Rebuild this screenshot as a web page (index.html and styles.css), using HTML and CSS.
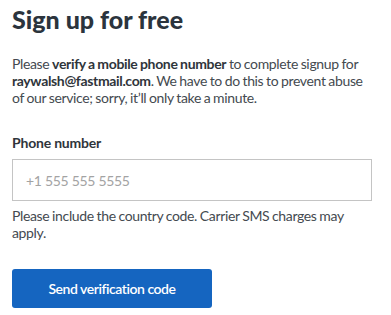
FILE: index.html
```html
<!DOCTYPE html>
<html>
<head>
<meta charset="utf-8">
<link rel="stylesheet" href="styles.css">
</head>
<body>
<main class="page">
  <h1 class="title">Sign up for free</h1>
  <p class="intro">Please <strong>verify a mobile phone number</strong> to complete signup for <strong>raywalsh@fastmail.com</strong>. We have to do this to prevent abuse of our service; sorry, it’ll only take a minute.</p>
  <form class="form">
    <label class="label" for="phone">Phone number</label>
    <input class="input" id="phone" type="tel" placeholder="+1 555 555 5555">
    <p class="help">Please include the country code. Carrier SMS charges may apply.</p>
    <button class="button" type="button">Send verification code</button>
  </form>
</main>
</body>
</html>
```
FILE: styles.css
```css
html, body {
  margin: 0;
  padding: 0;
  background: #ffffff;
}
.page {
  padding: 4px 12px 0 12px;
  width: 367px;
  font-family: Lato, "Noto Sans", sans-serif;
  color: #444a50;
}
.title {
  margin: 0;
  font-size: 25px;
  line-height: 30px;
  font-weight: 900;
  letter-spacing: 0;
  color: #2b343d;
}
.intro {
  margin: 21px 0 0 0;
  width: 364px;
  font-size: 14px;
  line-height: 17px;
  letter-spacing: -0.35px;
  word-spacing: -0.5px;
}
.intro strong {
  font-weight: 700;
  color: #2f353b;
}
.form {
  display: flex;
  flex-direction: column;
  margin-top: 28px;
}
.label {
  font-size: 14px;
  line-height: 17px;
  font-weight: 700;
  letter-spacing: -0.2px;
  color: #2f353b;
}
.input {
  margin-top: 8px;
  box-sizing: border-box;
  width: 360px;
  height: 42px;
  border: 1px solid #c4c4c4;
  border-radius: 0;
  padding: 0 13px;
  font-family: inherit;
  font-size: 14px;
  letter-spacing: -0.3px;
  color: #333;
  outline: none;
}
.input::placeholder {
  color: #a3a3a3;
}
.help {
  margin: 6px 0 0 0;
  font-size: 14px;
  line-height: 17px;
  letter-spacing: -0.35px;
  word-spacing: -0.5px;
  width: 345px;
}
.button {
  margin-top: 28px;
  width: 200px;
  height: 39px;
  padding: 0;
  border: none;
  border-radius: 3px;
  background: #1565c0;
  color: #ffffff;
  font-family: inherit;
  font-size: 14px;
  font-weight: 600;
  letter-spacing: -0.45px;
}
```
